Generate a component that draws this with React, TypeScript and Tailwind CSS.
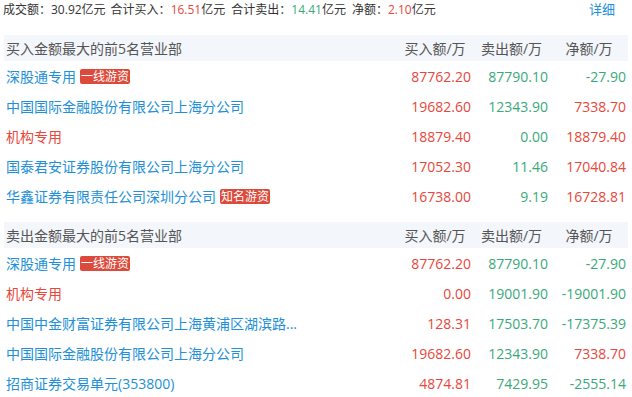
import React from "react";

type Row = { name: string; tag?: string; red?: boolean; buy: string; sell: string; net: string; netNeg: boolean };

const buyRows: Row[] = [
  { name: "深股通专用", tag: "一线游资", buy: "87762.20", sell: "87790.10", net: "-27.90", netNeg: true },
  { name: "中国国际金融股份有限公司上海分公司", buy: "19682.60", sell: "12343.90", net: "7338.70", netNeg: false },
  { name: "机构专用", red: true, buy: "18879.40", sell: "0.00", net: "18879.40", netNeg: false },
  { name: "国泰君安证券股份有限公司上海分公司", buy: "17052.30", sell: "11.46", net: "17040.84", netNeg: false },
  { name: "华鑫证券有限责任公司深圳分公司", tag: "知名游资", buy: "16738.00", sell: "9.19", net: "16728.81", netNeg: false },
];

const sellRows: Row[] = [
  { name: "深股通专用", tag: "一线游资", buy: "87762.20", sell: "87790.10", net: "-27.90", netNeg: true },
  { name: "机构专用", red: true, buy: "0.00", sell: "19001.90", net: "-19001.90", netNeg: true },
  { name: "中国中金财富证券有限公司上海黄浦区湖滨路...", buy: "128.31", sell: "17503.70", net: "-17375.39", netNeg: true },
  { name: "中国国际金融股份有限公司上海分公司", buy: "19682.60", sell: "12343.90", net: "7338.70", netNeg: false },
  { name: "招商证券交易单元(353800)", buy: "4874.81", sell: "7429.95", net: "-2555.14", netNeg: true },
];

const RED = "text-[#e8473b]";
const GREEN = "text-[#3aa97a]";

function Section({ title, rows, className }: { title: string; rows: Row[]; className?: string }) {
  return (
    <div className={className}>
      <div className="grid grid-cols-[1fr_76px_77px_78px] h-[26px] items-center bg-[#f3f6fa] text-[14px] text-[#555]">
        <div className="pl-[2px]">{title}</div>
        <div className="text-center">买入额/万</div>
        <div className="text-center">卖出额/万</div>
        <div className="text-center">净额/万</div>
      </div>
      {rows.map((r, i) => (
        <div key={i} className="grid grid-cols-[1fr_76px_77px_78px] h-[30px] items-center text-[14px]">
          <div className="pl-[2px] flex items-center whitespace-nowrap">
            <span className={r.red ? RED : "text-[#2290d6]"}>{r.name}</span>
            {r.tag && (
              <span className="ml-[4px] h-[15px] px-[1px] flex items-center rounded-[2px] bg-[#dc4a3b] text-white text-[12px] leading-[15px]">
                {r.tag}
              </span>
            )}
          </div>
          <div className={`text-right pr-[2px] ${RED}`}>{r.buy}</div>
          <div className={`text-right pr-[2px] ${GREEN}`}>{r.sell}</div>
          <div className={`text-right pr-[2px] ${r.netNeg ? GREEN : RED}`}>{r.net}</div>
        </div>
      ))}
    </div>
  );
}

export default function App() {
  return (
    <div
      className="w-[632px] h-[397px] bg-white overflow-hidden"
      style={{ fontFamily: '"Open Sans", "Noto Sans CJK SC", sans-serif' }}
    >
      <div className="h-[20px] flex items-center px-[3px] text-[12px] text-[#333] whitespace-nowrap">
        <span className="mr-[5px]">成交额：30.92亿元</span>
        <span className="mr-[6px]">合计买入：<span className={RED}>16.51</span>亿元</span>
        <span className="mr-[6px]">合计卖出：<span className={GREEN}>14.41</span>亿元</span>
        <span>净额：<span className={RED}>2.10</span>亿元</span>
        <span className="ml-auto mr-[14px] text-[#2290d6] text-[13px]">详细</span>
      </div>
      <div className="px-[4px] mt-[15px]">
        <Section title="买入金额最大的前5名营业部" rows={buyRows} />
        <Section title="卖出金额最大的前5名营业部" rows={sellRows} className="mt-[11px]" />
      </div>
    </div>
  );
}
